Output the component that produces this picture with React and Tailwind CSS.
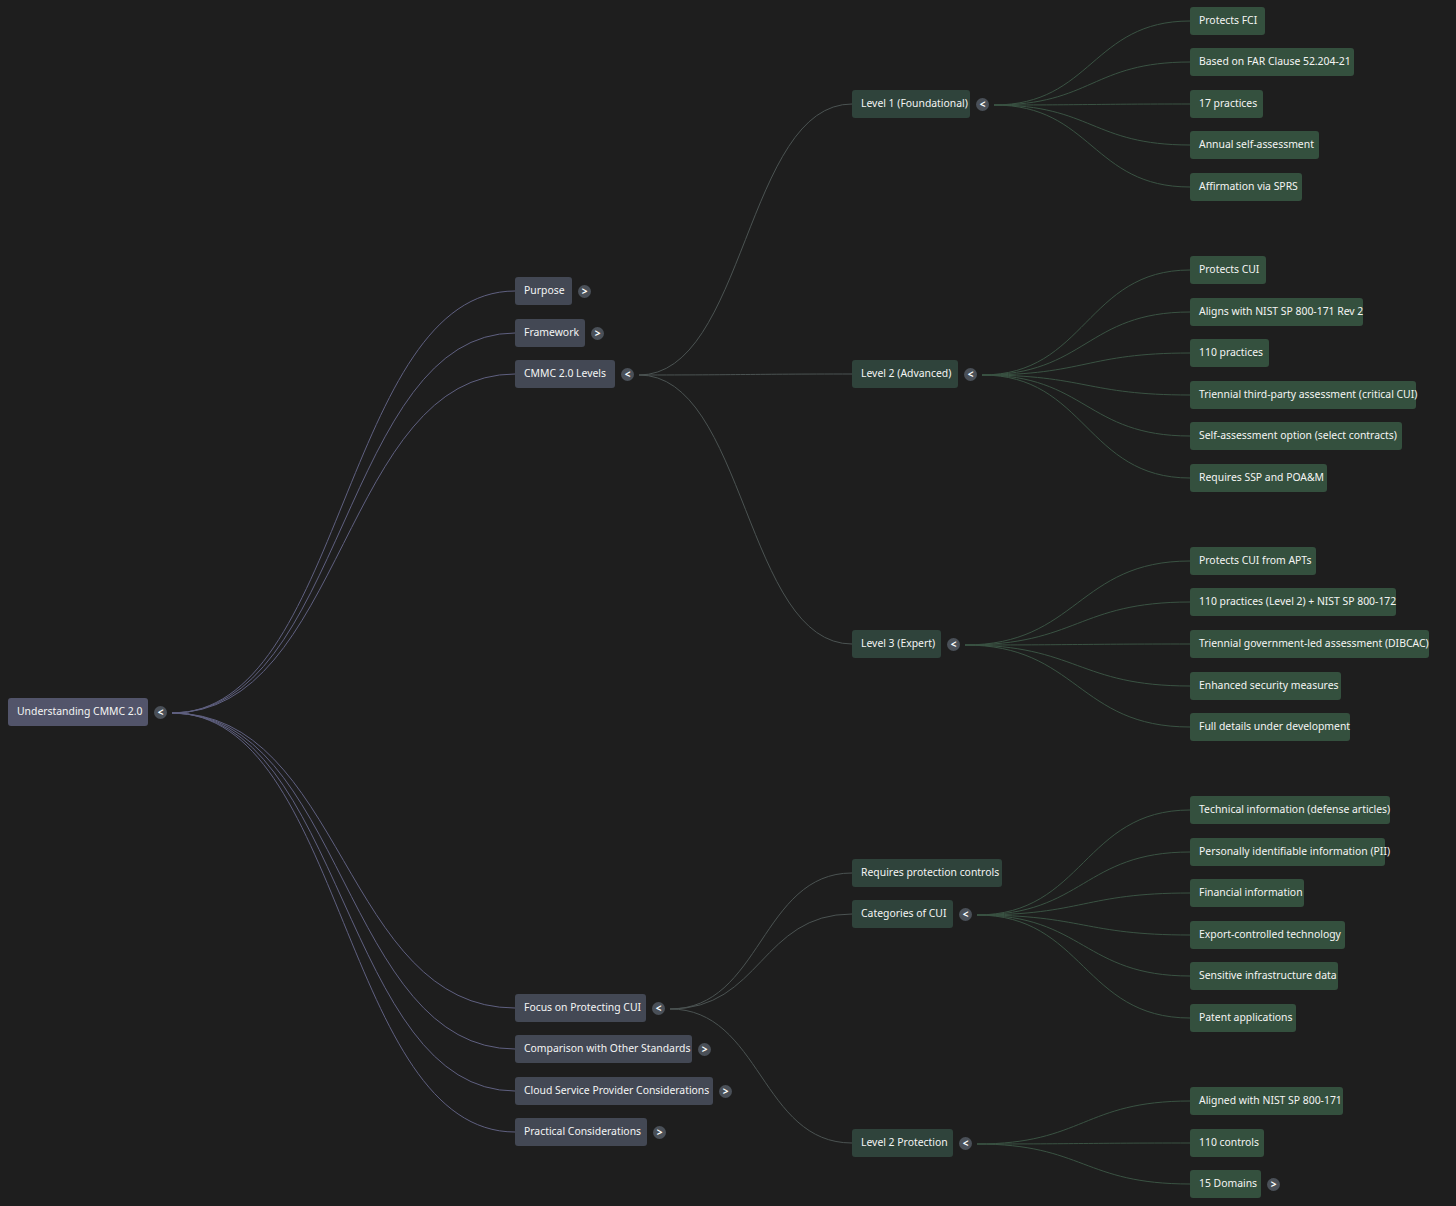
import React from 'react';

// mind map nodes: x, centre y and box width measured from the canvas
const nodes = [
  { id: 'root', label: 'Understanding CMMC 2.0', x: 8, y: 712, w: 140, kind: 'root', t: '<' },
  { id: 'p', label: 'Purpose', x: 515, y: 291, w: 57, kind: 'l1', t: '>', parent: 'root' },
  { id: 'f', label: 'Framework', x: 515, y: 333, w: 70, kind: 'l1', t: '>', parent: 'root' },
  { id: 'c', label: 'CMMC 2.0 Levels', x: 515, y: 374, w: 100, kind: 'l1', t: '<', parent: 'root' },
  { id: 'fo', label: 'Focus on Protecting CUI', x: 515, y: 1008, w: 131, kind: 'l1', t: '<', parent: 'root' },
  { id: 'co', label: 'Comparison with Other Standards', x: 515, y: 1049, w: 177, kind: 'l1', t: '>', parent: 'root' },
  { id: 'cl', label: 'Cloud Service Provider Considerations', x: 515, y: 1091, w: 198, kind: 'l1', t: '>', parent: 'root' },
  { id: 'pr', label: 'Practical Considerations', x: 515, y: 1132, w: 132, kind: 'l1', t: '>', parent: 'root' },
  { id: 'L1', label: 'Level 1 (Foundational)', x: 852, y: 104, w: 118, kind: 'l2', t: '<', parent: 'c' },
  { id: 'L2', label: 'Level 2 (Advanced)', x: 852, y: 374, w: 106, kind: 'l2', t: '<', parent: 'c' },
  { id: 'L3', label: 'Level 3 (Expert)', x: 852, y: 644, w: 89, kind: 'l2', t: '<', parent: 'c' },
  { id: 'rq', label: 'Requires protection controls', x: 852, y: 873, w: 150, kind: 'l2', parent: 'fo' },
  { id: 'cat', label: 'Categories of CUI', x: 852, y: 914, w: 101, kind: 'l2', t: '<', parent: 'fo' },
  { id: 'lp', label: 'Level 2 Protection', x: 852, y: 1143, w: 101, kind: 'l2', t: '<', parent: 'fo' },
];

const leaves = [
  ['L1', 'Protects FCI', 21, 75],
  ['L1', 'Based on FAR Clause 52.204-21', 62, 164],
  ['L1', '17 practices', 104, 73],
  ['L1', 'Annual self-assessment', 145, 129],
  ['L1', 'Affirmation via SPRS', 187, 112],
  ['L2', 'Protects CUI', 270, 76],
  ['L2', 'Aligns with NIST SP 800-171 Rev 2', 312, 173],
  ['L2', '110 practices', 353, 79],
  ['L2', 'Triennial third-party assessment (critical CUI)', 395, 226],
  ['L2', 'Self-assessment option (select contracts)', 436, 212],
  ['L2', 'Requires SSP and POA&M', 478, 137],
  ['L3', 'Protects CUI from APTs', 561, 126],
  ['L3', '110 practices (Level 2) + NIST SP 800-172', 602, 206],
  ['L3', 'Triennial government-led assessment (DIBCAC)', 644, 239],
  ['L3', 'Enhanced security measures', 686, 151],
  ['L3', 'Full details under development', 727, 160],
  ['cat', 'Technical information (defense articles)', 810, 200],
  ['cat', 'Personally identifiable information (PII)', 852, 195],
  ['cat', 'Financial information', 893, 114],
  ['cat', 'Export-controlled technology', 935, 155],
  ['cat', 'Sensitive infrastructure data', 976, 148],
  ['cat', 'Patent applications', 1018, 106],
  ['lp', 'Aligned with NIST SP 800-171', 1101, 153],
  ['lp', '110 controls', 1143, 74],
  ['lp', '15 Domains', 1184, 71, '>'],
].map(([parent, label, y, w, t], i) => ({ id: 'leaf' + i, parent, label, x: 1190, y, w, kind: 'leaf', t }));

const all = [...nodes, ...leaves];
const byId = Object.fromEntries(all.map((n) => [n.id, n]));

const styles = {
  root: 'bg-[#52546a]',
  l1: 'bg-[#434854]',
  l2: 'bg-[#2f433b]',
  leaf: 'bg-[#34503e]',
};
const linkColor = { root: '#5f6080', l1: '#4b5352', l2: '#3a5343', leaf: '#3a5343' };

function Node({ n }) {
  return (
    <div className="absolute flex items-center" style={{ left: n.x, top: n.y - 14 }}>
      <div
        className={`${styles[n.kind]} h-[28px] rounded-[3px] pl-[9px] flex items-center text-[10.4px] text-[#f4f5f4] whitespace-nowrap`}
        style={{ width: n.w }}
      >
        {n.label}
      </div>
      {n.t && (
        <div className="ml-[6px] w-[13px] h-[13px] rounded-full bg-[#4a5058] text-white text-[10px] font-bold flex items-center justify-center leading-none">
          {n.t}
        </div>
      )}
    </div>
  );
}

export default function App() {
  const links = all
    .filter((n) => n.parent)
    .map((n) => {
      const p = byId[n.parent];
      const sx = p.x + p.w + 24;
      const sy = p.y + 1;
      const ex = n.x;
      const ey = n.y;
      const mx = (sx + ex) / 2;
      return { d: `M${sx},${sy} C${mx},${sy} ${mx},${ey} ${ex},${ey}`, c: linkColor[p.kind], id: n.id };
    });
  return (
    <div className="relative w-[1456px] h-[1206px] bg-[#1e1e1e] overflow-hidden font-['Liberation_Serif',serif]">
      <svg className="absolute inset-0" width="1456" height="1206">
        {links.map((l) => (
          <path key={l.id} d={l.d} fill="none" stroke={l.c} strokeWidth="1" />
        ))}
      </svg>
      {all.map((n) => (
        <Node key={n.id} n={n} />
      ))}
    </div>
  );
}
